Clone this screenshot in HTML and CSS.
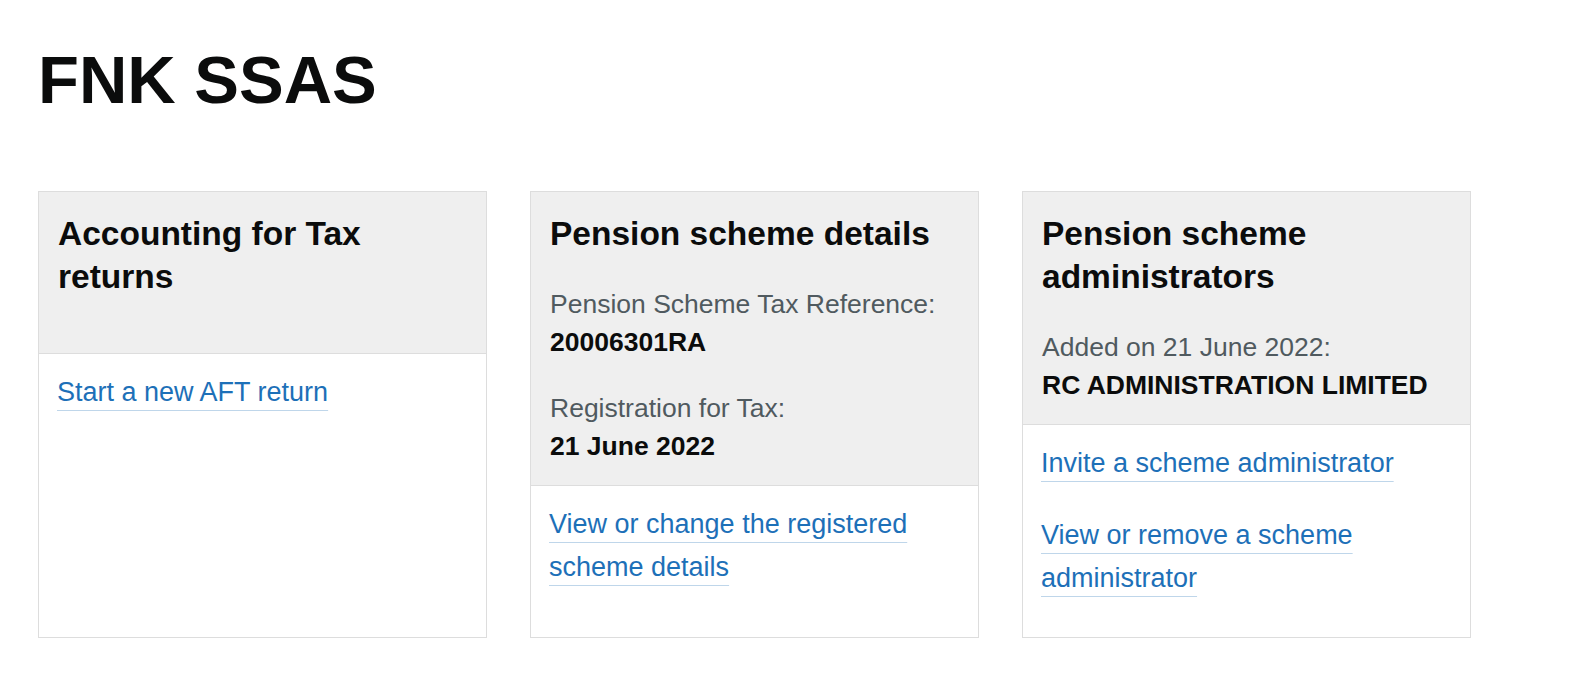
FILE: index.html
```html
<!DOCTYPE html>
<html lang="en">
<head>
<meta charset="utf-8">
<title>FNK SSAS</title>
<link rel="stylesheet" href="styles.css">
</head>
<body>
<main class="page">
  <h1 class="page__title">FNK SSAS</h1>
  <div class="cards">
    <section class="card">
      <div class="card__header card__header--title-only">
        <h2 class="card__title">Accounting for Tax returns</h2>
      </div>
      <div class="card__body">
        <ul class="card__links">
          <li><a class="card__link" href="#">Start a new AFT return</a></li>
        </ul>
      </div>
    </section>
    <section class="card">
      <div class="card__header">
        <h2 class="card__title">Pension scheme details</h2>
        <p class="card__detail"><span class="card__label">Pension Scheme Tax Reference:</span><br><strong class="card__value">20006301RA</strong></p>
        <p class="card__detail"><span class="card__label">Registration for Tax:</span><br><strong class="card__value">21 June 2022</strong></p>
      </div>
      <div class="card__body">
        <ul class="card__links">
          <li><a class="card__link" href="#">View or change the registered scheme details</a></li>
        </ul>
      </div>
    </section>
    <section class="card">
      <div class="card__header">
        <h2 class="card__title">Pension scheme administrators</h2>
        <p class="card__detail"><span class="card__label">Added on 21 June 2022:</span><br><strong class="card__value">RC ADMINISTRATION LIMITED</strong></p>
      </div>
      <div class="card__body">
        <ul class="card__links">
          <li><a class="card__link" href="#">Invite a scheme administrator</a></li>
          <li><a class="card__link" href="#">View or remove a scheme administrator</a></li>
        </ul>
      </div>
    </section>
  </div>
</main>
</body>
</html>
```

FILE: styles.css
```css
* { box-sizing: border-box; }

html, body {
  margin: 0;
  padding: 0;
  background: #ffffff;
}

body {
  font-family: "Liberation Sans", Arial, sans-serif;
  color: #0b0c0c;
}

.page {
  padding: 42px 38px 0 38px;
}

.page__title {
  margin: 0 0 74px 0;
  font-size: 67px;
  line-height: 75px;
  font-weight: 700;
  color: #0b0c0c;
}

.cards {
  display: grid;
  grid-template-columns: repeat(3, 449px);
  column-gap: 43px;
  align-items: stretch;
}

.card {
  display: flex;
  flex-direction: column;
  border: 1px solid #dddddd;
  background: #ffffff;
}

.card__header {
  background: #efefef;
  border-bottom: 1px solid #dddddd;
  padding: 20px 20px 20px 19px;
}

.card__header--title-only {
  padding-bottom: 25px;
}

.card__title {
  margin: 0 0 30px 0;
  font-size: 33.5px;
  line-height: 43px;
  font-weight: 700;
  color: #0b0c0c;
}

.card__detail {
  margin: 0 0 28px 0;
  font-size: 26.5px;
  line-height: 38px;
}

.card__detail:last-child {
  margin-bottom: 0;
}

.card__label {
  color: #505a5f;
}

.card__value {
  font-weight: 700;
  color: #0b0c0c;
}

.card__body {
  flex: 1;
  padding: 17px 20px 8px 18px;
}

.card__links {
  list-style: none;
  margin: 0;
  padding: 0;
}

.card__links li {
  margin: 0 0 29px 0;
  font-size: 27px;
  line-height: 43px;
}

.card__link {
  color: #1d70b8;
  text-decoration: underline;
  text-decoration-color: #bfd6ea;
  text-decoration-thickness: 1px;
  text-underline-offset: 9px;
}
```
